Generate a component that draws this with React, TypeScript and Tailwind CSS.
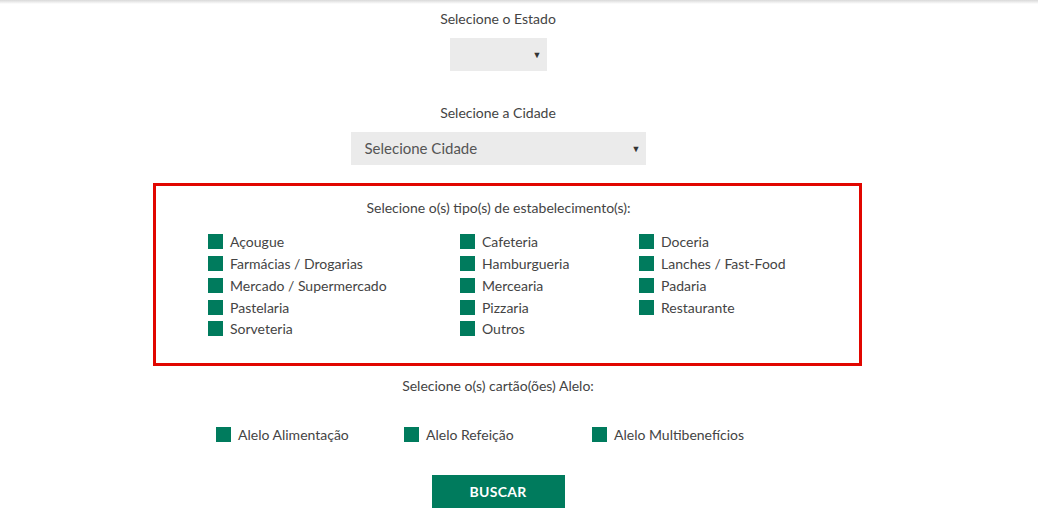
const tipos: string[][] = [
  ["Açougue", "Farmácias / Drogarias", "Mercado / Supermercado", "Pastelaria", "Sorveteria"],
  ["Cafeteria", "Hamburgueria", "Mercearia", "Pizzaria", "Outros"],
  ["Doceria", "Lanches / Fast-Food", "Padaria", "Restaurante"],
];

const cartoes = ["Alelo Alimentação", "Alelo Refeição", "Alelo Multibenefícios"];

function Check({ label }: { label: string }) {
  return (
    <label className="flex items-center gap-[7px] h-[21.75px]">
      <span className="w-[15px] h-[15px] bg-[#007b5d] shrink-0" />
      <span>{label}</span>
    </label>
  );
}

export default function App() {
  return (
    <main
      className="w-[1038px] h-[531px] bg-white text-[14px] text-[#444] overflow-hidden"
      style={{ fontFamily: "Lato, 'Open Sans', sans-serif" }}
    >
      <div className="h-[4px] bg-gradient-to-b from-[#d9d9d9] to-white" />
      <div className="w-[996px] flex flex-col items-center">
        <p className="mt-[6px] leading-[18px]">Selecione o Estado</p>
        <div className="mt-[10px] w-[97px] h-[33px] bg-[#ebebeb] flex items-center justify-end pr-[5px]">
          <span className="text-[9px] text-[#333]">▼</span>
        </div>

        <p className="mt-[33px] leading-[18px]">Selecione a Cidade</p>
        <div className="mt-[10px] w-[295px] h-[33px] bg-[#ebebeb] flex items-center justify-between pl-[14px] pr-[5px]">
          <span className="text-[15px] text-[#555]">Selecione Cidade</span>
          <span className="text-[9px] text-[#333]">▼</span>
        </div>
      </div>

      <section className="ml-[153px] mt-[18px] w-[709px] h-[183px] border-[3px] border-[#e10600] flex flex-col">
        <p className="mt-[13px] text-center leading-[18px] pr-[18px]">
          Selecione o(s) tipo(s) de estabelecimento(s):
        </p>
        <div className="mt-[14px] ml-[52px] flex">
          <div className="w-[252px] flex flex-col">
            {tipos[0].map((t) => (
              <Check key={t} label={t} />
            ))}
          </div>
          <div className="w-[179px] flex flex-col">
            {tipos[1].map((t) => (
              <Check key={t} label={t} />
            ))}
          </div>
          <div className="flex flex-col">
            {tipos[2].map((t) => (
              <Check key={t} label={t} />
            ))}
          </div>
        </div>
      </section>

      <div className="w-[996px] flex flex-col items-center">
        <p className="mt-[11px] leading-[18px]">Selecione o(s) cartão(ões) Alelo:</p>
        <div className="mt-[29px] flex">
          {cartoes.map((c) => (
            <div key={c} className="w-[188px]">
              <Check label={c} />
            </div>
          ))}
        </div>
        <button className="mt-[29px] w-[133px] h-[33px] bg-[#007b5d] text-white font-bold text-[14px] tracking-[0.3px]">
          BUSCAR
        </button>
      </div>
    </main>
  );
}
